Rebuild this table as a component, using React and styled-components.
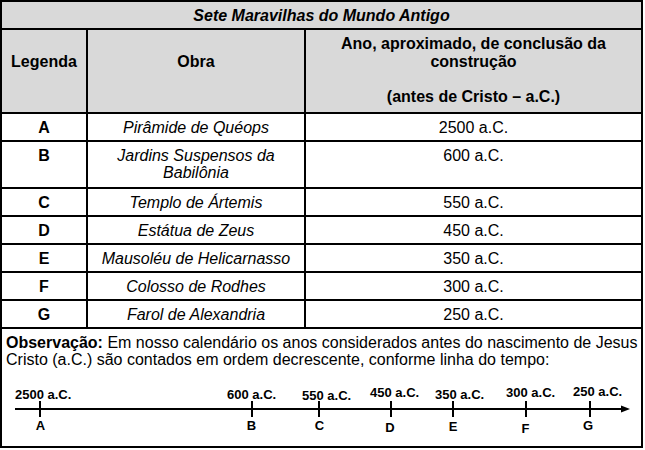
import React from "react";
import styled, { createGlobalStyle } from "styled-components";

const GlobalStyle = createGlobalStyle`
  html, body {
    margin: 0;
    padding: 0;
    background: #fff;
  }
  body {
    font-family: "Liberation Sans", Arial, sans-serif;
    color: #000;
  }
`;

const Sheet = styled.div`
  width: 643px;
  box-sizing: border-box;
  border: 2px solid #000;
  font-size: 16px;
  line-height: 17px;
`;

const TitleBar = styled.div`
  height: 28px;
  box-sizing: border-box;
  padding-top: 5px;
  background: #d9d9d9;
  border-bottom: 2px solid #000;
  text-align: center;
  font-weight: 700;
  font-style: italic;
`;

const Row = styled.div`
  display: grid;
  grid-template-columns: 86px 218px 1fr;
  height: ${(p) => p.$h || 28}px;
  box-sizing: border-box;
  border-bottom: 2px solid #000;
  background: ${(p) => (p.$head ? "#d9d9d9" : "#fff")};
`;

const Cell = styled.div`
  padding: ${(p) => p.$top ?? 5}px 4px 0;
  border-right: 2px solid #000;
  text-align: center;
  font-weight: ${(p) => (p.$bold ? 700 : 400)};
  font-style: ${(p) => (p.$italic ? "italic" : "normal")};
  line-height: ${(p) => (p.$head ? "17.6px" : "17.3px")};

  &:last-child {
    border-right: none;
  }
`;

const Notes = styled.div`
  height: 117px;
  box-sizing: border-box;
  padding: 5px 0 0 4px;
`;

const NoteText = styled.p`
  margin: 0;
  line-height: 17px;
`;

const Timeline = styled.svg`
  display: block;
  margin: 2px 0 0 -4px;
  font-family: "Liberation Sans", Arial, sans-serif;
  font-weight: 700;
  font-size: 13px;
`;

const wonders = [
  { key: "A", name: "Pirâmide de Quéops", year: "2500 a.C." },
  { key: "B", name: "Jardins Suspensos da Babilônia", year: "600 a.C.", h: 47 },
  { key: "C", name: "Templo de Ártemis", year: "550 a.C." },
  { key: "D", name: "Estátua de Zeus", year: "450 a.C." },
  { key: "E", name: "Mausoléu de Helicarnasso", year: "350 a.C." },
  { key: "F", name: "Colosso de Rodhes", year: "300 a.C." },
  { key: "G", name: "Farol de Alexandria", year: "250 a.C." },
];

// tick x, label x/baseline, letter x/baseline (page coords)
const marks = [
  { tick: 40, label: "2500 a.C.", lx: 15, ly: 399, letter: "A", cx: 40.5, cy: 430 },
  { tick: 252, label: "600 a.C.", lx: 227, ly: 399, letter: "B", cx: 251.5, cy: 430 },
  { tick: 319, label: "550 a.C.", lx: 302, ly: 400, letter: "C", cx: 319.5, cy: 430 },
  { tick: 391, label: "450 a.C.", lx: 370, ly: 397, letter: "D", cx: 390, cy: 431.5 },
  { tick: 453, label: "350 a.C.", lx: 435, ly: 399, letter: "E", cx: 453, cy: 431 },
  { tick: 526, label: "300 a.C.", lx: 506, ly: 397, letter: "F", cx: 525.5, cy: 432.5 },
  { tick: 590, label: "250 a.C.", lx: 573, ly: 396, letter: "G", cx: 588, cy: 430 },
];

function TimeAxis() {
  return (
    <Timeline width="639" height="76" viewBox="2 370 639 76">
      <line x1="15" y1="409" x2="623" y2="409" stroke="#000" strokeWidth="2" />
      <polygon points="621,405.5 630,409 621,412.5" fill="#000" />
      {marks.map((m) => (
        <g key={m.letter}>
          <line x1={m.tick} y1="401" x2={m.tick} y2="417" stroke="#000" strokeWidth="2" />
          <text x={m.lx} y={m.ly}>{m.label}</text>
          <text x={m.cx} y={m.cy} textAnchor="middle">{m.letter}</text>
        </g>
      ))}
    </Timeline>
  );
}

export default function App() {
  return (
    <>
      <GlobalStyle />
      <Sheet>
        <TitleBar>Sete Maravilhas do Mundo Antigo</TitleBar>
        <Row $head $h={84}>
          <Cell $bold $head $top={23}>Legenda</Cell>
          <Cell $bold $head $top={23}>Obra</Cell>
          <Cell $bold $head>
            Ano, aproximado, de conclusão da
            <br />
            construção
            <br />
            <br />
            (antes de Cristo – a.C.)
          </Cell>
        </Row>
        {wonders.map((w) => (
          <Row key={w.key} $h={w.h}>
            <Cell $bold>{w.key}</Cell>
            <Cell $italic>{w.name}</Cell>
            <Cell>{w.year}</Cell>
          </Row>
        ))}
        <Notes>
          <NoteText>
            <b>Observação:</b> Em nosso calendário os anos considerados antes do
            nascimento de Jesus Cristo (a.C.) são contados em ordem decrescente,
            conforme linha do tempo:
          </NoteText>
          <TimeAxis />
        </Notes>
      </Sheet>
    </>
  );
}
